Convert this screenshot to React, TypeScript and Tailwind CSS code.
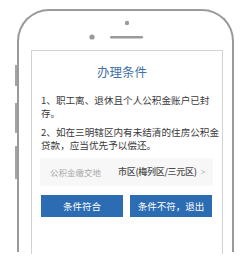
const FONT = { fontFamily: '"Noto Sans CJK SC", "Noto Sans", sans-serif' };

function SideButton({ top, height }: { top: number; height: number }) {
  return (
    <div
      className="absolute left-[-4px] w-[2px] bg-[#a5a5a5]"
      style={{ top, height }}
    />
  );
}

export default function App() {
  return (
    <div className="h-[262px] w-[249px] overflow-hidden bg-white" style={FONT}>
      <div className="relative ml-[17px] mt-[9px] h-[243px] w-[217px] rounded-t-[32px] border-2 border-b-0 border-[#9a9a9a]">
        <SideButton top={54} height={21} />
        <SideButton top={92} height={30} />
        <SideButton top={135} height={33} />

        <svg width="213" height="39" className="block">
          <circle cx="108" cy="12" r="2.2" fill="#9a9a9a" />
          <circle cx="73" cy="26" r="2.6" fill="#9a9a9a" />
          <rect x="91" y="25" width="33" height="2.4" rx="1.2" fill="#9a9a9a" />
        </svg>

        <div className="ml-[12px] h-[204px] w-[192px] border border-b-0 border-[#d2d2d2] pl-[8px] pr-[9px]">
          <div className="pr-[9px] pt-[13px] text-center text-[12.5px] leading-[16px] text-[#4170a8]">
            办理条件
          </div>

          <div className="mt-[14px] pl-[1px] text-[9.6px] leading-[12.5px] text-[#3a3a3a]">
            <p className="whitespace-nowrap">
              1、职工离、退休且个人公积金账户已封
              <br />
              存。
            </p>
            <p className="mt-[7px] whitespace-nowrap">
              2、如在三明辖区内有未结清的住房公积金
              <br />
              贷款，应当优先予以偿还。
            </p>
          </div>

          <div className="mt-[7px] flex h-[28px] items-center whitespace-nowrap bg-[#f7f7f7] pl-[10px] pr-[6px]">
            <span className="w-[68px] shrink-0 text-[8.5px] text-[#a8a8a8]">公积金缴交地</span>
            <span className="shrink-0 text-[9px] font-medium tracking-[-0.3px] text-[#4a4a4a]">市区(梅列区/三元区)</span>
            <span className="ml-[4px] text-[9px] text-[#bbbbbb]">&gt;</span>
          </div>

          <div className="mt-[9px] flex gap-[7px] px-[1px]">
            <button className="h-[22px] w-[82px] bg-[#2b6cb3] text-[9.5px] text-white">条件符合</button>
            <button className="h-[22px] w-[82px] bg-[#2b6cb3] text-[9.5px] text-white">条件不符，退出</button>
          </div>
        </div>
      </div>
    </div>
  );
}
